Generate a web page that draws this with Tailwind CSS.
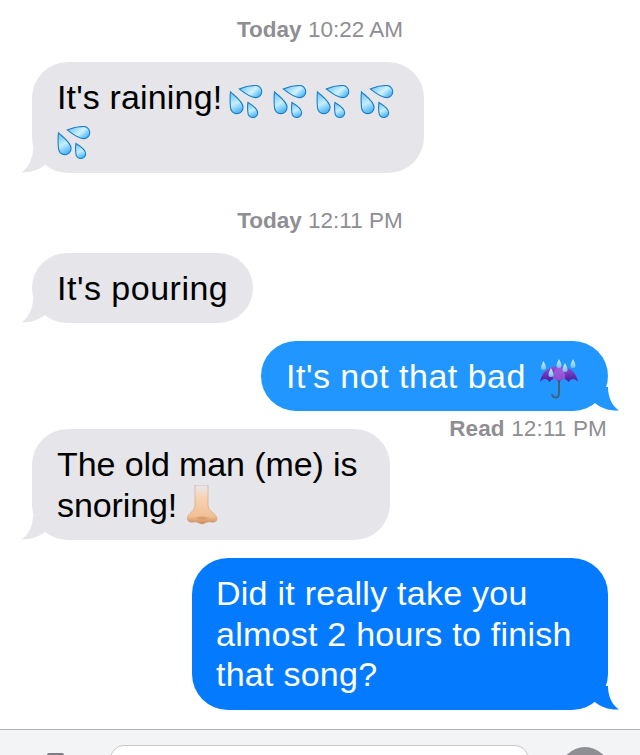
<!DOCTYPE html>
<html lang="en">
<head>
  <meta charset="UTF-8" />
  <title>Messages</title>
  <script src="https://cdn.jsdelivr.net/npm/@tailwindcss/browser@4"></script>
</head>
<body class="bg-white h-[755px] w-[640px] overflow-hidden font-['Liberation_Sans',Arial,sans-serif]">

  <!-- shared emoji parts -->
  <svg width="0" height="0" class="absolute">
    <defs>
      <linearGradient id="dropFill" x1="0" y1="0" x2="0.3" y2="1">
        <stop offset="0" stop-color="#5fc0f6" />
        <stop offset="0.6" stop-color="#c6eefe" />
        <stop offset="1" stop-color="#55bcf5" />
      </linearGradient>
      <linearGradient id="topDropFill" x1="0" y1="0" x2="1" y2="0.6">
        <stop offset="0" stop-color="#5fc0f6" />
        <stop offset="0.65" stop-color="#d2f2fe" />
        <stop offset="1" stop-color="#55bcf5" />
      </linearGradient>
      <linearGradient id="canopy" x1="0" y1="0" x2="0" y2="1">
        <stop offset="0" stop-color="#9a52dc" />
        <stop offset="1" stop-color="#46189a" />
      </linearGradient>
      <linearGradient id="rain" x1="0" y1="0" x2="0" y2="1">
        <stop offset="0" stop-color="#cfeefc" />
        <stop offset="1" stop-color="#6cc0ee" />
      </linearGradient>
      <linearGradient id="skin" x1="0" y1="0" x2="0" y2="1">
        <stop offset="0" stop-color="#f6dcc3" stop-opacity="0" />
        <stop offset="0.3" stop-color="#f6d4b4" />
        <stop offset="0.8" stop-color="#f2c094" />
        <stop offset="1" stop-color="#c98a58" />
      </linearGradient>
      <symbol id="drops" viewBox="0 0 34 34">
        <path d="M1 7C5 11 14 17 14 23A6.5 6.5 0 0 1 1 23C.5 17 .5 11 1 7Z" fill="url(#dropFill)" stroke="#1a7cc4" stroke-width="1.1" />
        <path d="M10 4C15 2 22 .5 27 .5A6.2 6.2 0 0 1 27 13C22 13 15 8 10 4Z" fill="url(#topDropFill)" stroke="#1a7cc4" stroke-width="1.1" />
        <path d="M19 18C24 21 29 25 29 28.5A5 5 0 0 1 19 28.5C18.5 25 18.5 21 19 18Z" fill="url(#dropFill)" stroke="#1a7cc4" stroke-width="1.1" />
      </symbol>
    </defs>
  </svg>

  <div class="flex flex-col">
    <p class="mt-[17px] h-[26px] text-center text-[22.5px] leading-[26px] text-[#8e8e93]"><span class="font-bold">Today</span> 10:22 AM</p>

    <!-- raining -->
    <div class="relative ml-8 mt-[19px] h-[111px] w-[392px] rounded-[36px] bg-[#e5e5ea] px-[25px] py-[15px] text-[34px] leading-[40.5px] tracking-[0.15px] text-black">
      It's raining!
      <svg class="ml-[-3px] inline-block align-[-9px] w-[34px] h-[33px]"><use href="#drops" /></svg>
      <svg class="inline-block align-[-9px] w-[34px] h-[33px]"><use href="#drops" /></svg>
      <svg class="inline-block align-[-9px] w-[34px] h-[33px]"><use href="#drops" /></svg>
      <svg class="inline-block align-[-9px] w-[34px] h-[33px]"><use href="#drops" /></svg>
      <svg class="inline-block align-[-9px] w-[34px] h-[33px]"><use href="#drops" /></svg>
      <svg class="absolute left-[-10px] bottom-0" width="30" height="24" viewBox="0 0 30 24"><path d="M11 0C11 10 6 19 0 23C8 24 16 21 23 16L23 0Z" fill="#e5e5ea" /></svg>
    </div>

    <p class="mt-[35px] h-[26px] text-center text-[22.5px] leading-[26px] text-[#8e8e93]"><span class="font-bold">Today</span> 12:11 PM</p>

    <!-- pouring -->
    <div class="relative ml-8 mt-[19px] h-[70px] w-[221px] whitespace-nowrap rounded-[35px] bg-[#e5e5ea] px-[25px] py-[15px] text-[34px] leading-[40.5px] tracking-[0.5px] text-black">
      It's pouring
      <svg class="absolute left-[-10px] bottom-0" width="30" height="24" viewBox="0 0 30 24"><path d="M11 0C11 10 6 19 0 23C8 24 16 21 23 16L23 0Z" fill="#e5e5ea" /></svg>
    </div>

    <!-- not that bad -->
    <div class="relative ml-auto mr-8 mt-[18px] flex h-[70px] w-[347px] items-center rounded-[35px] bg-[#2196fe] pl-[25px] text-[34px] leading-[40.5px] tracking-[0.5px] text-white">
      <span>It's not that bad</span>
      <svg class="ml-[13px] mt-[6px] shrink-0" width="41" height="41" viewBox="0 0 41 41">
        <path d="M20 20V35A3.5 3.5 0 0 1 13 35" fill="none" stroke="#47607a" stroke-width="2" />
        <path d="M1 23C3 12 11 7 20 7S37 12 39 23C36 19 32 19 29.500 23C27 19 23 19 20 23C17 19 13 19 10.500 23C8 19 4 19 1 23Z" fill="url(#canopy)" />
        <path d="M20 7C15 11 13 16 14 20C16 20 18 21 20 22C22 21 24 20 26 20C27 16 25 11 20 7Z" fill="#a765e2" opacity=".7" />
        <path d="M4.500 2C3 5 2 7 2 8.500A2.500 2.500 0 0 0 7 8.500C7 7 6 5 4.500 2Z" fill="url(#rain)" />
        <path d="M20 0C18.500 3 17.500 5 17.500 6.500A2.500 2.500 0 0 0 22.500 6.500C22.500 5 21.500 3 20 0Z" fill="url(#rain)" />
        <path d="M26 4C24.500 7 23.500 9 23.500 10.500A2.500 2.500 0 0 0 28.500 10.500C28.500 9 27.500 7 26 4Z" fill="url(#rain)" />
        <path d="M34 0C32.500 3 31.500 5 31.500 6.500A2.500 2.500 0 0 0 36.500 6.500C36.500 5 35.500 3 34 0Z" fill="url(#rain)" />
        <path d="M12 9C10.500 12 9.500 14 9.500 15.500A2.500 2.500 0 0 0 14.500 15.500C14.500 14 13.500 12 12 9Z" fill="url(#rain)" />
      </svg>
      <svg class="absolute right-[-11px] bottom-0" width="30" height="24" viewBox="0 0 30 24"><path d="M0 0L19 0C19 10 23 19 30 23.500C20 24 12 21 6 16L0 16Z" fill="#2196fe" /></svg>
    </div>

    <!-- snoring row, the read label sits beside the bubble top -->
    <div class="mt-[18px] flex items-start justify-between pl-8 pr-[33px]">
      <div class="relative h-[111px] w-[358px] rounded-[36px] bg-[#e5e5ea] px-[25px] py-[15px] text-[34px] leading-[40.5px] tracking-[-0.1px] text-black">
        The old man (me) is snoring!
        <svg class="my-[-10px] ml-[-1px] inline-block align-[2px]" width="34" height="40" viewBox="0 0 34 40">
          <path d="M9 0H22V20C22 25 27 27 30 31C33 35 29 38 25 37C21 36 19 39 16 39C13 39 11 36 7 37C3 38 0 35 2 31C4 27 9 26 9 20Z" fill="url(#skin)" stroke="#c98a58" stroke-opacity=".6" stroke-width=".7" />
          <path d="M10 33C12 31 20 31 22 33C20 35 12 35 10 33Z" fill="#c98a58" opacity=".5" />
        </svg>
        <svg class="absolute left-[-10px] bottom-0" width="30" height="24" viewBox="0 0 30 24"><path d="M11 0C11 10 6 19 0 23C8 24 16 21 23 16L23 0Z" fill="#e5e5ea" /></svg>
      </div>
      <p class="mt-[-13px] h-[26px] text-[22.5px] leading-[26px] tracking-[0.15px] text-[#8e8e93]"><span class="font-bold">Read</span> 12:11 PM</p>
    </div>

    <!-- song -->
    <div class="relative ml-auto mr-8 mt-[18px] h-[152px] w-[416px] rounded-[36px] bg-[#047bff] pl-[24px] pr-[20px] py-[15px] text-[34px] leading-[40.5px] tracking-[0.25px] text-white">
      Did it really take you almost 2 hours to finish that song?
      <svg class="absolute right-[-11px] bottom-0" width="30" height="24" viewBox="0 0 30 24"><path d="M0 0L19 0C19 10 23 19 30 23.500C20 24 12 21 6 16L0 16Z" fill="#047bff" /></svg>
    </div>

    <!-- input bar, cut off by the bottom of the screen -->
    <div class="mt-[19px] flex h-[26px] items-start overflow-hidden border-t border-[#b1b2b6] bg-[#f3f4f6] pt-[15px]">
      <div class="ml-[47px] mt-[8px] h-[10px] w-[17px] shrink-0 rounded-t-[2px] bg-[#7d7d83]"></div>
      <div class="ml-[46px] h-[40px] w-[419px] shrink-0 rounded-t-[14px] border border-[#c6c6cb] bg-white"></div>
      <div class="ml-[31px] mt-[2px] h-[50px] w-[50px] shrink-0 rounded-full bg-[#8e8e93]"></div>
    </div>
  </div>
</body>
</html>
